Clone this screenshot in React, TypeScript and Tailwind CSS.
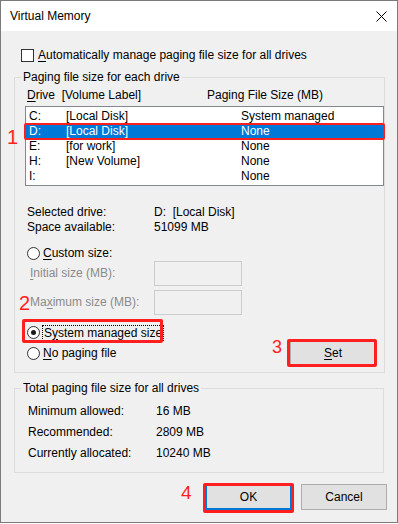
import React from "react";

function Radio({ checked }: { checked?: boolean }) {
  return (
    <span className="flex h-[13px] w-[13px] shrink-0 items-center justify-center rounded-full border border-[#333333] bg-white">
      {checked && <span className="h-[5px] w-[5px] rounded-full bg-[#1a1a1a]" />}
    </span>
  );
}

const drives = [
  { d: "C:", l: "[Local Disk]", s: "System managed" },
  { d: "D:", l: "[Local Disk]", s: "None", sel: true },
  { d: "E:", l: "[for work]", s: "None" },
  { d: "H:", l: "[New Volume]", s: "None" },
  { d: "I:", l: "", s: "None" },
];

export default function App() {
  return (
    <div className="relative h-[524px] w-[398px] bg-white font-['Liberation_Sans',Arial,sans-serif] text-[12px] leading-[15px] text-black">
      <div className="flex h-[523px] w-[398px] flex-col border border-[#7a7a7a]">
        {/* title bar */}
        <div className="flex h-[30px] shrink-0 items-center justify-between bg-white pl-[9px] pr-[10px]">
          <span>Virtual Memory</span>
          <svg width="11" height="11" viewBox="0 0 11 11" className="mt-[1px]">
            <path d="M0.5 0.5 L10.5 10.5 M10.5 0.5 L0.5 10.5" stroke="#000" strokeWidth="1" fill="none" />
          </svg>
        </div>

        {/* body */}
        <div className="flex flex-1 flex-col bg-[#f0f0f0]">
          <div className="mt-[17px] flex h-[15px] items-center gap-[4px] pl-[20px]">
            <span className="h-[13px] w-[13px] border border-[#333333] bg-white" />
            <span>
              <span className="underline underline-offset-[2px]">A</span>utomatically manage paging file size for all drives
            </span>
          </div>

          <fieldset className="ml-[13px] mt-[7px] w-[370px] border border-[#dcdcdc] pb-[7px]">
            <legend className="ml-[6px] px-[2px]">Paging file size for each drive</legend>
            <div className="mt-[3px] flex h-[15px] items-center pl-[12px]">
              <span className="w-[180px]">
                <span className="underline underline-offset-[2px]">D</span>rive&nbsp;&nbsp;[Volume Label]
              </span>
              <span>Paging File Size (MB)</span>
            </div>

            <div className="ml-[10px] mt-[3px] w-[359px] border border-[#828790] bg-white pb-[1px] pt-[2px]">
              {drives.map((r) => (
                <div
                  key={r.d}
                  className={`flex h-[15px] items-center pl-[3px] ${r.sel ? "bg-[#0078d7] text-white" : ""}`}
                >
                  <span className="w-[37px]">{r.d}</span>
                  <span className="w-[175px]">{r.l}</span>
                  <span>{r.s}</span>
                </div>
              ))}
            </div>

            <div className="mt-[19px] flex flex-col pl-[12px]">
              <div className="flex h-[15px] items-center">
                <span className="w-[127px]">Selected drive:</span>
                <span>D:&nbsp;&nbsp;[Local Disk]</span>
              </div>
              <div className="flex h-[15px] items-center">
                <span className="w-[127px]">Space available:</span>
                <span>51099 MB</span>
              </div>
            </div>

            <div className="flex flex-col pl-[12px]">
              <div className="mt-[11px] flex h-[15px] items-center gap-[3px]">
                <Radio />
                <span>
                  <span className="underline underline-offset-[2px]">C</span>ustom size:
                </span>
              </div>
              <div className="flex h-[25px] items-center">
                <span className="ml-[3px] w-[124px] text-[#8a8a8a]">
                  <span className="underline underline-offset-[2px]">I</span>nitial size (MB):
                </span>
                <span className="h-[25px] w-[88px] border border-[#cccccc] bg-[#f0f0f0]" />
              </div>
              <div className="mt-[4px] flex h-[25px] items-center">
                <span className="ml-[3px] w-[124px] text-[#8a8a8a]">
                  Ma<span className="underline underline-offset-[2px]">x</span>imum size (MB):
                </span>
                <span className="h-[25px] w-[88px] border border-[#cccccc] bg-[#f0f0f0]" />
              </div>

              <div className="mt-[10px] flex items-start justify-between pr-[8px]">
                <div className="flex flex-col">
                  <div className="flex h-[15px] items-center gap-[2px]">
                    <Radio checked />
                    <span className="border border-dotted border-black px-[1px] leading-[14px]">
                      S<span className="underline underline-offset-[2px]">y</span>stem managed size
                    </span>
                  </div>
                  <div className="mt-[6px] flex h-[15px] items-center gap-[3px]">
                    <Radio />
                    <span>
                      <span className="underline underline-offset-[2px]">N</span>o paging file
                    </span>
                  </div>
                </div>
                <button className="mt-[16px] flex h-[24px] w-[86px] items-center justify-center border border-[#adadad] bg-[#e1e1e1]">
                  <span>
                    <span className="underline underline-offset-[2px]">S</span>et
                  </span>
                </button>
              </div>
            </div>
          </fieldset>

          <fieldset className="ml-[13px] mt-[8px] w-[370px] border border-[#dcdcdc] pb-[8px]">
            <legend className="ml-[6px] px-[2px]">Total paging file size for all drives</legend>
            <div className="mt-[5px] flex flex-col pl-[13px]">
              {[
                ["Minimum allowed:", "16 MB"],
                ["Recommended:", "2809 MB"],
                ["Currently allocated:", "10240 MB"],
              ].map(([a, b]) => (
                <div key={a} className="flex h-[21px] items-center">
                  <span className="w-[128px]">{a}</span>
                  <span>{b}</span>
                </div>
              ))}
            </div>
          </fieldset>

          <div className="mt-[11px] flex justify-end gap-[9px] pr-[10px]">
            <button className="flex h-[26px] w-[87px] items-center justify-center border-2 border-[#0078d7] bg-[#e1e1e1]">
              OK
            </button>
            <button className="flex h-[26px] w-[86px] items-center justify-center border border-[#adadad] bg-[#e1e1e1]">
              Cancel
            </button>
          </div>
        </div>
      </div>

      {/* annotations */}
      <div className="pointer-events-none absolute left-[24px] top-[123px] h-[17px] w-[361px] rounded-[2px] border-2 border-[#ff1f1f]" />
      <div className="pointer-events-none absolute left-[22px] top-[319px] h-[24px] w-[141px] rounded-[2px] border-[3px] border-[#ff1f1f]" />
      <div className="pointer-events-none absolute left-[287px] top-[339px] h-[28px] w-[90px] rounded-[2px] border-[3px] border-[#ff1f1f]" />
      <div className="pointer-events-none absolute left-[203px] top-[483px] h-[30px] w-[91px] rounded-[2px] border-[3px] border-[#ff1f1f]" />

      <span className="absolute left-[7px] top-[127px] text-[20px] leading-[20px] text-[#ff1f1f]">1</span>
      <span className="absolute left-[19px] top-[293px] text-[20px] leading-[20px] text-[#ff1f1f]">2</span>
      <span className="absolute left-[272px] top-[338px] text-[18px] leading-[18px] text-[#ff1f1f]">3</span>
      <span className="absolute left-[181px] top-[483px] text-[19px] leading-[19px] text-[#ff1f1f]">4</span>
    </div>
  );
}
